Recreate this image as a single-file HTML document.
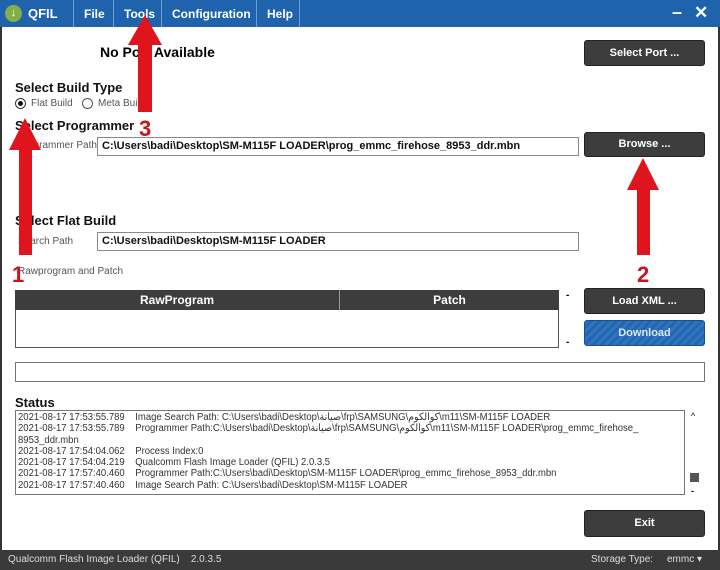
<!DOCTYPE html>
<html><head><meta charset="utf-8"><style>
*{margin:0;padding:0;box-sizing:border-box}
body{width:720px;height:570px;overflow:hidden;background:#fff;font-family:"Liberation Sans",Arial,sans-serif;position:relative}
.a{position:absolute}
.tb{left:0;top:0;width:720px;height:27px;background:#1f63ad}
.mi{top:0;height:27px;color:#fff;font-weight:bold;font-size:12px;line-height:28px;border-left:1px solid #6f9fd4;padding-left:10px}
.btn{background:#3d3d3d;color:#fff;font-weight:bold;font-size:11px;text-align:center;border-radius:3px;border:1px solid #222}
.h{font-weight:bold;font-size:13px;color:#111}
.s{font-size:10px;color:#555}
.in{border:1px solid #888;background:#fff;font-size:11px;font-weight:bold;color:#111;padding-left:4px;line-height:16px}
.log{font-size:10px;color:#333;line-height:11.3px;white-space:pre;transform:scaleX(0.95);transform-origin:0 0}
</style></head><body>
<div class="a" style="left:0;top:0;width:720px;height:570px;border:2px solid #333;border-top:none"></div>
<div class="a tb"></div>
<div class="a" style="left:5px;top:5px;width:17px;height:17px;border-radius:50%;background:#7fb04a;color:#fff;font-size:11px;text-align:center;line-height:17px">↓</div>
<div class="a" style="left:28px;top:0;color:#fff;font-weight:bold;font-size:13px;line-height:28px">QFIL</div>
<div class="a mi" style="left:73px;width:40px">File</div>
<div class="a mi" style="left:113px;width:48px">Tools</div>
<div class="a mi" style="left:161px;width:95px">Configuration</div>
<div class="a mi" style="left:256px;width:44px;border-right:1px solid #6f9fd4">Help</div>
<div class="a" style="left:672px;top:2px;color:#fff;font-size:18px;font-weight:bold">–</div>
<div class="a" style="left:694px;top:3px;color:#fff;font-size:17px;font-weight:bold">✕</div>

<div class="a" style="left:100px;top:44px;font-weight:bold;font-size:14px">No Port Available</div>
<div class="a btn" style="left:584px;top:40px;width:121px;height:26px;line-height:24px">Select Port ...</div>

<div class="a h" style="left:15px;top:80px">Select Build Type</div>
<div class="a" style="left:15px;top:98px;width:11px;height:11px;border:1px solid #333;border-radius:50%"><div style="margin:2px;width:5px;height:5px;border-radius:50%;background:#111"></div></div>
<div class="a s" style="left:31px;top:98px">Flat Build</div>
<div class="a" style="left:82px;top:98px;width:11px;height:11px;border:1px solid #555;border-radius:50%"></div>
<div class="a s" style="left:98px;top:98px">Meta Build</div>
<div class="a h" style="left:15px;top:118px">Select Programmer</div>
<div class="a s" style="left:18px;top:140px">Programmer Path</div>
<div class="a in" style="left:97px;top:137px;width:482px;height:19px">C:\Users\badi\Desktop\SM-M115F LOADER\prog_emmc_firehose_8953_ddr.mbn</div>
<div class="a btn" style="left:584px;top:132px;width:121px;height:25px;line-height:23px">Browse ...</div>

<div class="a h" style="left:15px;top:213px">Select Flat Build</div>
<div class="a s" style="left:18px;top:236px">Search Path</div>
<div class="a in" style="left:97px;top:232px;width:482px;height:19px">C:\Users\badi\Desktop\SM-M115F LOADER</div>
<div class="a s" style="left:18px;top:266px">Rawprogram and Patch</div>

<div class="a" style="left:15px;top:290px;width:544px;height:58px;border:1px solid #555"></div>
<div class="a" style="left:15px;top:290px;width:544px;height:20px;background:#3d3d3d"></div>
<div class="a" style="left:15px;top:290px;width:325px;height:20px;color:#fff;font-weight:bold;font-size:12px;text-align:center;line-height:20px;border-right:1px solid #999">RawProgram</div>
<div class="a" style="left:340px;top:290px;width:219px;height:20px;color:#fff;font-weight:bold;font-size:12px;text-align:center;line-height:20px">Patch</div>
<div class="a" style="left:566px;top:290px;font-weight:bold;font-size:10px">-</div>
<div class="a" style="left:566px;top:337px;font-weight:bold;font-size:10px">-</div>
<div class="a btn" style="left:584px;top:288px;width:121px;height:26px;line-height:24px">Load XML ...</div>
<div class="a btn" style="left:584px;top:320px;width:121px;height:26px;line-height:24px;background:repeating-linear-gradient(135deg,#2f74c0 0 3px,#2466ad 3px 6px);border-color:#1a4f8a;color:#dce8f5">Download</div>

<div class="a" style="left:15px;top:362px;width:690px;height:20px;border:1px solid #777"></div>

<div class="a h" style="left:15px;top:395px">Status</div>
<div class="a" style="left:15px;top:410px;width:670px;height:85px;border:1px solid #777"></div>
<div class="a log" style="left:18px;top:412px">2021-08-17 17:53:55.789    Image Search Path: C:\Users\badi\Desktop\صيانة\frp\SAMSUNG\كوالكوم\m11\SM-M115F LOADER
2021-08-17 17:53:55.789    Programmer Path:C:\Users\badi\Desktop\صيانة\frp\SAMSUNG\كوالكوم\m11\SM-M115F LOADER\prog_emmc_firehose_
8953_ddr.mbn
2021-08-17 17:54:04.062    Process Index:0
2021-08-17 17:54:04.219    Qualcomm Flash Image Loader (QFIL) 2.0.3.5
2021-08-17 17:57:40.460    Programmer Path:C:\Users\badi\Desktop\SM-M115F LOADER\prog_emmc_firehose_8953_ddr.mbn
2021-08-17 17:57:40.460    Image Search Path: C:\Users\badi\Desktop\SM-M115F LOADER</div>
<div class="a" style="left:691px;top:411px;font-size:9px">^</div>
<div class="a" style="left:690px;top:473px;width:9px;height:9px;background:#555"></div>
<div class="a" style="left:691px;top:486px;font-size:9px;font-weight:bold">-</div>
<div class="a btn" style="left:584px;top:510px;width:121px;height:27px;line-height:25px">Exit</div>

<div class="a" style="left:0;top:550px;width:720px;height:20px;background:#3a3a3a"></div>
<div class="a" style="left:8px;top:554px;color:#ddd;font-size:10px">Qualcomm Flash Image Loader (QFIL)&nbsp;&nbsp;&nbsp; 2.0.3.5</div>
<div class="a" style="left:591px;top:554px;color:#ddd;font-size:10px">Storage Type:&nbsp;&nbsp;&nbsp;&nbsp; emmc ▾</div>

<svg class="a" style="left:0;top:0" width="720" height="570">
<g fill="#e0141c">
<polygon points="138,112 152,112 152,45 162,45 145,15 128,45 138,45"/>
<polygon points="19,255 32,255 32,150 41,150 25,118 9,150 19,150"/>
<polygon points="637,255 650,255 650,190 659,190 643,158 627,190 637,190"/>
</g>
<g fill="#c8141c" font-family="Liberation Sans,sans-serif" font-weight="bold" font-size="22">
<text x="139" y="136">3</text><text x="12" y="282">1</text><text x="637" y="282">2</text>
</g>
</svg>
</body></html>
